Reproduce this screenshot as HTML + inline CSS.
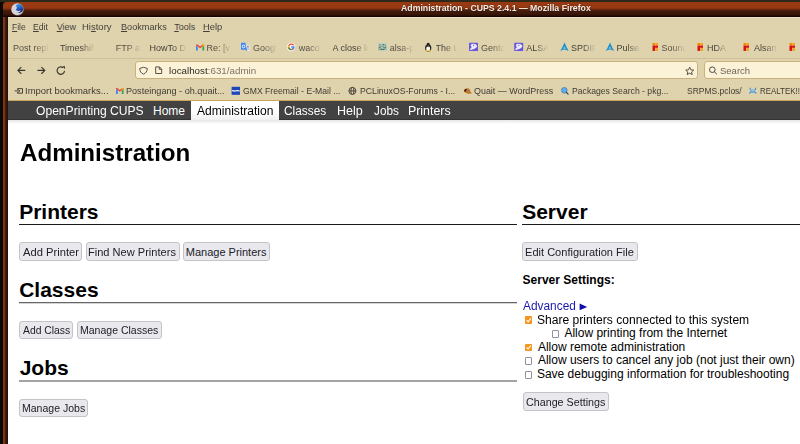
<!DOCTYPE html>
<html><head><meta charset="utf-8">
<style>
*{margin:0;padding:0;box-sizing:border-box}
html,body{width:800px;height:444px;overflow:hidden;background:#0c0a06;font-family:"Liberation Sans",sans-serif;position:relative}
.a{position:absolute}
.tx{position:absolute;white-space:nowrap;line-height:normal}
.tx u{text-decoration:underline;text-underline-offset:1px;text-decoration-thickness:1px}
.btn{position:absolute;height:19px;border:1px solid #c3c3c8;border-radius:3px;background:#e9e9ed}
.cb{position:absolute;width:8px;height:8px;border:1px solid #8f8f9d;border-radius:1px;background:#fff}
.cbc{position:absolute;width:8px;height:8px;border-radius:1px;background:#f6951f}
.fade{-webkit-mask-image:linear-gradient(to right,#000 calc(100% - 13px),rgba(0,0,0,0.08) 100%);mask-image:linear-gradient(to right,#000 calc(100% - 13px),rgba(0,0,0,0.08) 100%);overflow:hidden}
svg{position:absolute;overflow:visible}
</style></head><body>
<!-- top strip -->
<div class="a" style="left:0;top:0;width:800px;height:2px;background:#2d291b"></div>
<!-- window frame -->
<div class="a" style="left:2.5px;top:2px;width:800px;height:450px;border-radius:4px 0 0 0;background:linear-gradient(to right,#7e3416 0px,#7e3416 1.5px,#4a1e0e 2px,#3a1a0c 3px,#2a1008 4.5px,#1c0404 5.5px)"></div>
<!-- title bar -->
<div class="a" style="left:2.5px;top:2px;width:800px;height:15px;border-radius:4px 0 0 0;background:linear-gradient(#9a3a13 0px,#983812 6px,#6a2810 7.5px,#421a0c 9px,#3c180a 12px,#2a0e06 13.5px,#180404 14.5px,#180404 15px)"></div>
<!-- firefox icon -->
<svg style="left:0;top:0" width="30" height="20" viewBox="0 0 30 20">
 <defs>
  <radialGradient id="ffg" cx="0.4" cy="0.45" r="0.65"><stop offset="0" stop-color="#f4f4f6"/><stop offset="0.7" stop-color="#cfcfd6"/><stop offset="1" stop-color="#8c8c96"/></radialGradient>
  <linearGradient id="ffb" x1="0.2" y1="0" x2="0.6" y2="1"><stop offset="0" stop-color="#44a4e8"/><stop offset="0.55" stop-color="#2458c0"/><stop offset="1" stop-color="#0c1660"/></linearGradient>
 </defs>
 <circle cx="17.5" cy="9.4" r="6.2" fill="url(#ffg)"/>
 <circle cx="18.9" cy="8.5" r="4.4" fill="url(#ffb)"/>
 <path d="M13.4 5.6 C15.2 5 16.9 6.2 16.9 7.7 C16.8 8.8 15.8 9.3 15.9 10.1 C17 11.1 19.2 11.1 20.9 10.3 C19.9 12.6 17.2 13.6 14.6 12.6 C12.2 11.2 12 7.6 13.4 5.6Z" fill="#d4d4da"/>
</svg>
<!-- chrome -->
<div class="a" style="left:8px;top:17px;width:800px;height:84px;background:#dfd3ae"></div>
<div class="a" style="left:8px;top:17px;width:800px;height:1px;background:#ece2c4"></div>
<div class="a" style="left:8px;top:58px;width:800px;height:1px;background:#cdbf9b"></div>
<div class="a" style="left:8px;top:100px;width:800px;height:1px;background:#c9a35a"></div>

<!-- nav buttons -->
<svg style="left:0;top:0" width="80" height="90">
 <g fill="none" stroke="#3a362e" stroke-width="1.15" stroke-linecap="round" stroke-linejoin="round">
  <path d="M17.9 70.4 H24.8 M21 67.3 L17.9 70.4 L21 73.5"/>
  <path d="M44.8 70.4 H37.9 M41.7 67.3 L44.8 70.4 L41.7 73.5"/>
  <path d="M64.42 71.37 A3.7 3.7 0 1 1 62.76 67.46"/>
 </g>
 <path d="M62.3 66.3 L65 66.3 L65 69 Z" fill="#3a362e"/>
</svg>
<!-- url bar -->
<div class="a" style="left:134.5px;top:61px;width:563px;height:18px;background:#fcf2d8;border:1px solid #c9b27e;border-radius:3px"></div>
<div class="a" style="left:703.5px;top:61px;width:110px;height:18px;background:#fcf2d8;border:1px solid #c9b27e;border-radius:3px"></div>
<svg style="left:0;top:0" width="800" height="90">
 <g fill="none" stroke="#46423a" stroke-width="0.9" stroke-linejoin="round">
  <path d="M143.5 67.3 L147.3 68.4 C147.3 71.2 145.9 73.2 143.5 74.2 C141.1 73.2 139.7 71.2 139.7 68.4 Z"/>
  <path d="M155.7 66.9 H159.5 L161.7 69.1 V73.5 H155.7 Z M159.3 67 V69.3 H161.6"/>
  <path d="M689.7 67.2 L690.9 69.8 L693.7 70.1 L691.6 72 L692.2 74.6 L689.7 73.2 L687.2 74.6 L687.8 72 L685.7 70.1 L688.5 69.8 Z"/>
  <circle cx="712.3" cy="69.7" r="2.8" stroke-width="0.95"/>
  <path d="M714.4 71.8 L716.6 74" stroke-width="1" stroke-linecap="round"/>
 </g>
</svg>

<!-- tab icons -->
<svg style="left:0;top:0" width="800" height="60">
 <!-- gmail tab -->
 <g transform="translate(196,44.3)">
  <path d="M0 1 V6.2 H1.8 V2.6 Z" fill="#4285f4"/>
  <path d="M8.2 1 V6.2 H6.4 V2.6 Z" fill="#34a853"/>
  <path d="M0 1 L4.1 4 L8.2 1 L8.2 0.2 L6.8 0.2 L4.1 2.2 L1.4 0.2 L0 0.2 Z" fill="#ea4335"/>
  <path d="M6.8 0.2 L8.2 0.2 L8.2 1.2 L6.4 2.6 Z" fill="#fbbc04"/>
 </g>
 <!-- google translate -->
 <rect x="245.8" y="44.4" width="4" height="6.8" rx="0.5" fill="#e4e4e6"/>
 <path d="M247 46.2 H248.8 M247.4 47.8 H248.6 M247.8 49.2 H248.4" stroke="#5a6a60" stroke-width="0.7"/>
 <path d="M241.6 42.8 H245.4 L247 49.8 H241.6 Q241 49.8 241 49.2 V43.4 Q241 42.8 241.6 42.8Z" fill="#4285f4"/>
 <path d="M245.8 49.8 H247.2 L246.5 51 Z" fill="#2a3a9a"/>
 <circle cx="243.6" cy="46.4" r="1.4" fill="none" stroke="#fff" stroke-width="0.9"/>
 <!-- google G -->
 <circle cx="291.1" cy="47" r="4.2" fill="#fff"/>
 <path d="M293.6 45.3 A2.7 2.7 0 1 0 293.9 47.6" fill="none" stroke="#ea4335" stroke-width="1.3"/>
 <path d="M288.6 46 A2.7 2.7 0 0 0 291.2 49.7" fill="none" stroke="#34a853" stroke-width="1.3"/>
 <path d="M288.5 47.5 A2.7 2.7 0 0 1 288.8 45.6" fill="none" stroke="#fbbc04" stroke-width="1.3"/>
 <path d="M291.2 47 H293.9 A2.7 2.7 0 0 1 292.5 49.4" fill="none" stroke="#4285f4" stroke-width="1.3"/>
 <!-- alsa -->
 <rect x="378.2" y="43" width="8.5" height="7.9" fill="#b4d4c4"/>
 <text x="378.6" y="50.4" font-size="9.6" font-family="Liberation Sans" fill="#1a2420" textLength="7.7" lengthAdjust="spacingAndGlyphs">ALSA</text>
 <!-- tux -->
 <ellipse cx="428.2" cy="48" rx="3.1" ry="3.4" fill="#1e1e1e"/>
 <ellipse cx="428.2" cy="48.7" rx="2" ry="2.4" fill="#fafafa"/>
 <ellipse cx="428.2" cy="44.7" rx="1.6" ry="1.9" fill="#1e1e1e"/>
 <path d="M424.9 51.2 L426.6 49.6 L427.6 51.3 Z M431.5 51.2 L429.8 49.6 L428.8 51.3 Z" fill="#f5b400"/>
 <path d="M427.5 45.4 H428.9 L428.2 46.2 Z" fill="#f5b400"/>
 <!-- gentoo x2 -->
 <g id="gent">
  <rect x="469" y="42.8" width="9" height="8.2" rx="0.6" fill="#6a5ad8"/>
  <path d="M470.2 50.2 C469.8 48.8 471.2 47.6 472 47 C470.8 46.6 470.4 45.6 471 44.6 C472 43.4 474.4 43.4 476 44.6 C477.2 45.4 477.4 46.8 476.4 47.6 C475.2 48.6 473.4 49.6 470.2 50.2Z" fill="#eeeafa"/>
  <circle cx="473.6" cy="45.4" r="0.6" fill="#6a5ad8"/>
 </g>
 <use href="#gent" x="45.2"/>
 <!-- arch x2 -->
 <path d="M564.5 42.6 C563.3 45.6 562 48.4 560.3 51 C561.8 50.1 563 49.6 564.5 49.4 C566 49.6 567.2 50.1 568.7 51 C567 48.4 565.7 45.6 564.5 42.6 Z M564.5 47.2 C563.8 47.3 563.3 47.9 563.1 48.5 L565.9 48.5 C565.7 47.9 565.2 47.3 564.5 47.2 Z" fill="#1793d1" fill-rule="evenodd"/>
 <path d="M610 42.6 C608.8 45.6 607.5 48.4 605.8 51 C607.3 50.1 608.5 49.6 610 49.4 C611.5 49.6 612.7 50.1 614.2 51 C612.5 48.4 611.2 45.6 610 42.6 Z M610 47.2 C609.3 47.3 608.8 47.9 608.6 48.5 L611.4 48.5 C611.2 47.9 610.7 47.3 610 47.2 Z" fill="#1793d1" fill-rule="evenodd"/>
 <!-- red squares x4 -->
 <g id="rs">
  <rect x="652.5" y="43" width="2.6" height="2.6" fill="#f08a00"/>
  <rect x="655.4" y="43" width="2.6" height="2.6" fill="#f6a01a"/>
  <rect x="652.5" y="45.6" width="2.6" height="5.3" fill="#d81010"/>
  <rect x="655.1" y="45.6" width="2.9" height="2.2" fill="#d81010"/>
  <rect x="655.4" y="48.2" width="2.6" height="2.7" fill="#f6a01a"/>
 </g>
 <use href="#rs" x="45"/>
 <use href="#rs" x="91"/>
 <use href="#rs" x="137"/>
</svg>

<!-- bookmark icons -->
<svg style="left:0;top:0" width="800" height="100">
 <g fill="none" stroke="#4a443a" stroke-width="1">
  <path d="M17.5 89.8 V88.6 H22.5 V93.2 H17.5 V92"/>
  <path d="M14.6 90.9 H19.6 M18.4 89.5 L19.9 90.9 L18.4 92.3"/>
 </g>
 <g transform="translate(116,87.8)">
  <path d="M0 1 V6.2 H1.8 V2.6 Z" fill="#4285f4"/>
  <path d="M7.6 1 V6.2 H5.8 V2.6 Z" fill="#34a853"/>
  <path d="M0 1 L3.8 4 L7.6 1 L7.6 0.2 L6.3 0.2 L3.8 2.2 L1.3 0.2 L0 0.2 Z" fill="#ea4335"/>
  <path d="M6.3 0.2 L7.6 0.2 L7.6 1.2 L5.8 2.6 Z" fill="#fbbc04"/>
 </g>
 <rect x="231.6" y="86.8" width="8.4" height="8" fill="#1d47b4"/>
 <path d="M232 90.9 C233.5 90.2 234.5 91.6 236 90.8 C237.2 90.2 238.4 91.2 239.6 90.6" stroke="#e8ecf8" stroke-width="1.3" fill="none"/>
 <g fill="none" stroke="#3e3a32" stroke-width="0.9">
  <circle cx="352.4" cy="90.9" r="3.5"/>
  <ellipse cx="352.4" cy="90.9" rx="1.5" ry="3.5"/>
  <path d="M348.9 90.9 H355.9"/>
 </g>
 <path d="M463.8 91.5 C464 89 466.5 87.8 468.6 88.6 C470 89.2 470.2 90.6 470.6 92 C471.4 92.6 472 93 471.8 93.6 C469 94 466 93.8 463.8 91.5Z" fill="#c8741c"/>
 <path d="M464.2 91 C464.6 89.4 466 88.8 467 89.2 C466.2 90 465.6 91 465.8 92 Z" fill="#2a1408"/>
 <ellipse cx="467.6" cy="90.4" rx="1" ry="0.9" fill="#7a8aa0"/>
 <circle cx="564.3" cy="90.3" r="2.9" fill="#5aaef2" stroke="#4a6a88" stroke-width="0.6"/>
 <path d="M566.4 92.4 L568.1 94.1" stroke="#2a3a4a" stroke-width="1.1" stroke-linecap="round"/>
 <g fill="none" stroke="#3a8ad8" stroke-width="1.1" stroke-linecap="round">
  <path d="M750.2 88 V89.6 M755.4 88 V89.6 M749.6 93.2 L751.4 91.6 M756 93.2 L754.2 91.6"/>
 </g>
 <ellipse cx="752.8" cy="91.2" rx="2.4" ry="1.9" fill="#6aa8dc"/>
 <circle cx="752.8" cy="90.6" r="1" fill="#a8c8e0"/>
</svg>

<!-- cups nav -->
<div class="a" style="left:8px;top:101px;width:800px;height:18.5px;background:#424242"></div>
<div class="a" style="left:8px;top:119px;width:800px;height:0.6px;background:#333"></div>
<div class="a" style="left:190.8px;top:101px;width:88.4px;height:19px;background:linear-gradient(#fff 0%,#fff 60%,#f0f0f0 100%)"></div>
<div class="a" style="left:8px;top:120px;width:800px;height:330px;background:#fff"></div>
<div class="a" style="left:8px;top:120px;width:800px;height:4px;background:linear-gradient(#e6e6e6,#fff)"></div>

<div class="tx" style="left:400.60px;top:3.40px;font:bold 8.4px Liberation Sans;color:#f2ede4;transform:scaleX(1.0429);transform-origin:0 0;text-shadow:0 0 1.5px rgba(0,0,0,.7)">Administration - CUPS 2.4.1 — Mozilla Firefox</div>
<div class="tx" style="left:12.00px;top:22.00px;font:9px Liberation Sans;color:#45413a;transform:scaleX(0.9429);transform-origin:0 0;"><u>F</u>ile</div>
<div class="tx" style="left:33.30px;top:22.00px;font:9px Liberation Sans;color:#45413a;transform:scaleX(0.9625);transform-origin:0 0;"><u>E</u>dit</div>
<div class="tx" style="left:56.70px;top:22.00px;font:9px Liberation Sans;color:#45413a;"><u>V</u>iew</div>
<div class="tx" style="left:82.44px;top:22.00px;font:9px Liberation Sans;color:#45413a;transform:scaleX(1.0556);transform-origin:0 0;">Hi<u>s</u>tory</div>
<div class="tx" style="left:120.50px;top:22.00px;font:9px Liberation Sans;color:#45413a;transform:scaleX(1.0156);transform-origin:0 0;"><u>B</u>ookmarks</div>
<div class="tx" style="left:174.20px;top:22.00px;font:9px Liberation Sans;color:#45413a;"><u>T</u>ools</div>
<div class="tx" style="left:203.00px;top:22.00px;font:9px Liberation Sans;color:#45413a;transform:scaleX(1.0389);transform-origin:0 0;"><u>H</u>elp</div>
<div class="tx" style="left:35.80px;top:104.00px;font:12px Liberation Sans;color:#fff;transform:scaleX(1.0085);transform-origin:0 0;">OpenPrinting CUPS</div>
<div class="tx" style="left:153.00px;top:104.00px;font:12px Liberation Sans;color:#fff;">Home</div>
<div class="tx" style="left:196.80px;top:104.00px;font:12px Liberation Sans;color:#000;transform:scaleX(1.0053);transform-origin:0 0;">Administration</div>
<div class="tx" style="left:283.75px;top:104.00px;font:12px Liberation Sans;color:#fff;transform:scaleX(0.9884);transform-origin:0 0;">Classes</div>
<div class="tx" style="left:336.96px;top:104.00px;font:12px Liberation Sans;color:#fff;transform:scaleX(1.0435);transform-origin:0 0;">Help</div>
<div class="tx" style="left:373.75px;top:104.00px;font:12px Liberation Sans;color:#fff;transform:scaleX(0.9800);transform-origin:0 0;">Jobs</div>
<div class="tx" style="left:408.47px;top:104.00px;font:12px Liberation Sans;color:#fff;transform:scaleX(1.0312);transform-origin:0 0;">Printers</div>
<div class="tx" style="left:169.00px;top:65.60px;font:9.3px Liberation Sans;color:#2e2a22;transform:scaleX(1.0549);transform-origin:0 0;">localhost<span style="color:#7d7666">:631/admin</span></div>
<div class="tx" style="left:719.68px;top:65.50px;font:9.3px Liberation Sans;color:#6e6654;transform:scaleX(1.0214);transform-origin:0 0;">Search</div>
<div class="tx" style="left:24.95px;top:85.80px;font:9px Liberation Sans;color:#403b32;transform:scaleX(1.0513);transform-origin:0 0;">Import bookmarks...</div>
<div class="tx" style="left:125.99px;top:85.80px;font:9px Liberation Sans;color:#403b32;transform:scaleX(1.0104);transform-origin:0 0;">Posteingang - oh.quait...</div>
<div class="tx" style="left:243.00px;top:85.80px;font:9px Liberation Sans;color:#403b32;transform:scaleX(0.9604);transform-origin:0 0;">GMX Freemail - E-Mail ...</div>
<div class="tx" style="left:359.78px;top:85.80px;font:9px Liberation Sans;color:#403b32;transform:scaleX(0.9665);transform-origin:0 0;">PCLinuxOS-Forums - I...</div>
<div class="tx" style="left:474.25px;top:85.80px;font:9px Liberation Sans;color:#403b32;transform:scaleX(0.9906);transform-origin:0 0;">Quait — WordPress</div>
<div class="tx" style="left:572.04px;top:85.80px;font:9px Liberation Sans;color:#403b32;transform:scaleX(0.9596);transform-origin:0 0;">Packages Search - pkg...</div>
<div class="tx" style="left:686.81px;top:85.80px;font:9px Liberation Sans;color:#403b32;transform:scaleX(0.9430);transform-origin:0 0;">SRPMS.pclos/</div>
<div class="tx" style="left:759.62px;top:85.80px;font:9px Liberation Sans;color:#403b32;transform:scaleX(0.8795);transform-origin:0 0;">REALTEK!!</div>
<div class="tx" style="left:19.59px;top:138.80px;font:bold 24px Liberation Sans;color:#000;transform:scaleX(1.0060);transform-origin:0 0;">Administration</div>
<div class="tx" style="left:19.20px;top:200.00px;font:bold 21px Liberation Sans;color:#000;">Printers</div>
<div class="tx" style="left:19.20px;top:278.00px;font:bold 21px Liberation Sans;color:#000;">Classes</div>
<div class="tx" style="left:19.70px;top:356.20px;font:bold 21px Liberation Sans;color:#000;">Jobs</div>
<div class="tx" style="left:522.20px;top:200.00px;font:bold 21px Liberation Sans;color:#000;">Server</div>
<div class="tx" style="left:522.60px;top:272.90px;font:bold 12px Liberation Sans;color:#000;">Server Settings:</div>
<div class="tx" style="left:523.10px;top:298.90px;font:12px Liberation Sans;color:#1a1ab0;transform:scaleX(0.9906);transform-origin:0 0;">Advanced</div>
<div class="tx" style="left:536.89px;top:312.60px;font:12px Liberation Sans;color:#000;transform:scaleX(1.0067);transform-origin:0 0;">Share printers connected to this system</div>
<div class="tx" style="left:564.40px;top:326.00px;font:12px Liberation Sans;color:#000;">Allow printing from the Internet</div>
<div class="tx" style="left:537.90px;top:339.60px;font:12px Liberation Sans;color:#000;">Allow remote administration</div>
<div class="tx" style="left:537.90px;top:353.20px;font:12px Liberation Sans;color:#000;">Allow users to cancel any job (not just their own)</div>
<div class="tx" style="left:536.90px;top:366.80px;font:12px Liberation Sans;color:#000;">Save debugging information for troubleshooting</div>

<!-- rules -->
<div class="a" style="left:19px;top:224px;width:498px;height:1px;background:#1a1a1a"></div>
<div class="a" style="left:19px;top:302px;width:498px;height:2px;background:linear-gradient(#666 50%,#d4d4d4 50%)"></div>
<div class="a" style="left:19px;top:380px;width:498px;height:2px;background:#a3a3a3"></div>
<div class="a" style="left:522px;top:224px;width:290px;height:1px;background:#1a1a1a"></div>

<div class="btn" style="left:19px;top:242px;width:63.00px;height:18.5px"></div><div class="tx" style="left:22.50px;top:245.90px;font:11px Liberation Sans;color:#20202a;transform:scaleX(1.0164);transform-origin:0 0">Add Printer</div>
<div class="btn" style="left:85.5px;top:242px;width:94.00px;height:18.5px"></div><div class="tx" style="left:88.24px;top:245.90px;font:11px Liberation Sans;color:#20202a;transform:scaleX(1.0058);transform-origin:0 0">Find New Printers</div>
<div class="btn" style="left:183px;top:242px;width:87.00px;height:18.5px"></div><div class="tx" style="left:185.75px;top:245.90px;font:11px Liberation Sans;color:#20202a;transform:scaleX(1.0000);transform-origin:0 0">Manage Printers</div>
<div class="btn" style="left:19px;top:321px;width:54.00px;height:17.5px"></div><div class="tx" style="left:23.00px;top:324.10px;font:11px Liberation Sans;color:#20202a;transform:scaleX(0.9400);transform-origin:0 0">Add Class</div>
<div class="btn" style="left:76.6px;top:321px;width:85.00px;height:17.5px"></div><div class="tx" style="left:79.64px;top:324.10px;font:11px Liberation Sans;color:#20202a;transform:scaleX(0.9556);transform-origin:0 0">Manage Classes</div>
<div class="btn" style="left:19.2px;top:399px;width:69.30px;height:17.5px"></div><div class="tx" style="left:22.04px;top:402.40px;font:11px Liberation Sans;color:#20202a;transform:scaleX(0.9569);transform-origin:0 0">Manage Jobs</div>
<div class="btn" style="left:522px;top:242px;width:116.00px;height:18.5px"></div><div class="tx" style="left:525.39px;top:246.20px;font:11px Liberation Sans;color:#20202a;transform:scaleX(1.0056);transform-origin:0 0">Edit Configuration File</div>
<div class="btn" style="left:522.5px;top:392.4px;width:86.00px;height:18.5px"></div><div class="tx" style="left:526.00px;top:395.75px;font:11px Liberation Sans;color:#20202a;transform:scaleX(0.9753);transform-origin:0 0">Change Settings</div>
<div class="tx fade" style="left:13.00px;top:42.60px;width:35.25px;font:9px Liberation Sans;color:#564f43">Post reply</div>
<div class="tx fade" style="left:59.90px;top:42.60px;width:34.60px;font:9px Liberation Sans;color:#443f36">Timeshift</div>
<div class="tx fade" style="left:115.75px;top:42.60px;width:23.75px;font:9px Liberation Sans;color:#564f43">FTP archive</div>
<div class="tx fade" style="left:149.50px;top:42.60px;width:36.00px;font:9px Liberation Sans;color:#443f36">HowTo Debian</div>
<div class="tx fade" style="left:206.50px;top:42.60px;width:24.40px;font:9px Liberation Sans;color:#564f43">Re: [v</div>
<div class="tx fade" style="left:253.00px;top:42.60px;width:22.90px;font:9px Liberation Sans;color:#564f43">Google</div>
<div class="tx fade" style="left:298.75px;top:42.60px;width:22.15px;font:9px Liberation Sans;color:#564f43">waco</div>
<div class="tx fade" style="left:332.50px;top:42.60px;width:35.25px;font:9px Liberation Sans;color:#443f36">A close look</div>
<div class="tx fade" style="left:389.75px;top:42.60px;width:22.75px;font:9px Liberation Sans;color:#564f43">alsa-project</div>
<div class="tx fade" style="left:435.60px;top:42.60px;width:21.90px;font:9px Liberation Sans;color:#443f36">The Linux</div>
<div class="tx fade" style="left:481.00px;top:42.60px;width:23.00px;font:9px Liberation Sans;color:#564f43">Gentoo</div>
<div class="tx fade" style="left:526.25px;top:42.60px;width:21.50px;font:9px Liberation Sans;color:#443f36">ALSA sound</div>
<div class="tx fade" style="left:570.90px;top:42.60px;width:24.35px;font:9px Liberation Sans;color:#443f36">SPDIF out</div>
<div class="tx fade" style="left:616.50px;top:42.60px;width:23.75px;font:9px Liberation Sans;color:#443f36">PulseAudio</div>
<div class="tx fade" style="left:661.50px;top:42.60px;width:23.10px;font:9px Liberation Sans;color:#564f43">Sound</div>
<div class="tx fade" style="left:707.00px;top:42.60px;width:20.50px;font:9px Liberation Sans;color:#443f36">HDA Intel</div>
<div class="tx fade" style="left:754.00px;top:42.60px;width:23.00px;font:9px Liberation Sans;color:#443f36">Alsamixer</div>

<!-- advanced arrow -->
<svg style="left:0;top:0" width="800" height="444">
 <path d="M579.6 303.6 L587.2 306.9 L579.6 310.2 Z" fill="#1010a8"/>
</svg>
<!-- checkboxes -->
<div class="cbc" style="left:524.8px;top:316.3px;width:7.5px;height:7.6px"></div>
<div class="cbc" style="left:524.8px;top:343.5px;width:7.5px;height:7.6px"></div>
<svg style="left:0;top:0" width="800" height="444">
 <path d="M526.6 320.2 L528.1 321.8 L530.8 318.4" fill="none" stroke="#fff" stroke-width="1.1"/>
 <path d="M526.6 347.4 L528.1 349 L530.8 345.6" fill="none" stroke="#fff" stroke-width="1.1"/>
</svg>
<div class="cb" style="left:551.8px;top:330.1px;width:7.5px;height:7.6px"></div>
<div class="cb" style="left:524.8px;top:357.3px;width:7.5px;height:7.6px"></div>
<div class="cb" style="left:524.8px;top:371px;width:7.5px;height:7.6px"></div>

</body></html>
